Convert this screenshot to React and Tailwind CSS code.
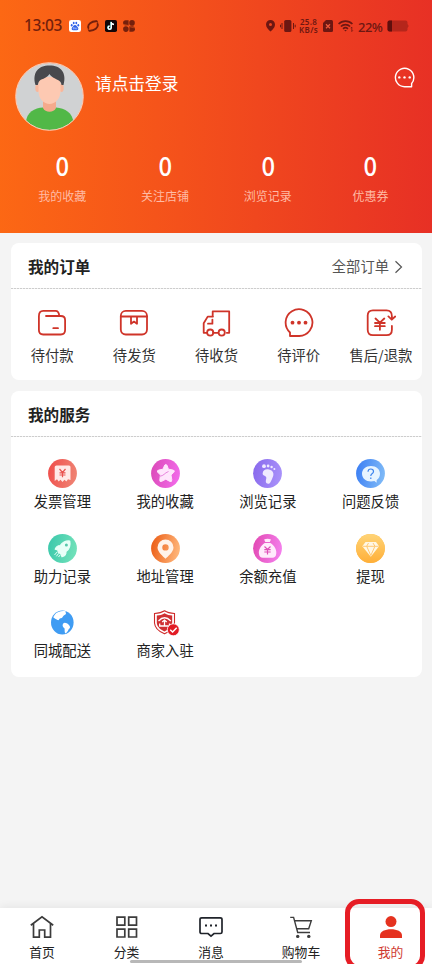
import React from "react";

const stats = ["我的收藏", "关注店铺", "浏览记录", "优惠券"];

function StatusBar() {
  return (
    <div className="flex h-[52px] items-center pl-6 pr-6 text-[#74200c]">
      <span className="w-[45px] font-['Noto_Sans'] text-[15.5px] font-medium leading-none tracking-[-0.3px]">13:03</span>
      <div className="flex items-center gap-[6px]">
        <svg width="12" height="12" viewBox="0 0 12 12">
          <rect width="12" height="12" rx="2.2" fill="#fff" />
          <g fill="#2f62e8">
            <ellipse cx="2.7" cy="5.3" rx="0.9" ry="1.2" />
            <ellipse cx="4.7" cy="3" rx="0.9" ry="1.3" />
            <ellipse cx="7.3" cy="3" rx="0.9" ry="1.3" />
            <ellipse cx="9.3" cy="5.3" rx="0.9" ry="1.2" />
            <path d="M6 4.9C7.4 4.9 7.8 6.4 8.8 7.3C10 8.6 9.2 10.3 7.7 10.2H4.3C2.8 10.3 2 8.6 3.2 7.3C4.2 6.4 4.6 4.9 6 4.9Z" />
          </g>
          <path d="M4.3 7.5H5.3V9H4.3ZM6.5 7.5V9H7.8V7.5" fill="none" stroke="#cfdcff" strokeWidth="0.5" />
        </svg>
        <svg width="12" height="12" viewBox="0 0 12 12" fill="none" stroke="#74200c" strokeLinecap="round">
          <path d="M1.4 8C.2 4.4 4.6 1 9.6 1.3" strokeWidth="1.9" />
          <path d="M10.6 4C11.8 7.6 7.4 11 2.4 10.7" strokeWidth="1.9" />
          <path d="M1.3 9.6C1.2 10.4 1.6 10.8 2.4 10.7M9.6 1.3C10.4 1.2 10.9 1.6 10.7 2.4" strokeWidth="1" />
        </svg>
        <svg width="12" height="12" viewBox="0 0 12 12">
          <rect width="12" height="12" rx="1.8" fill="#120608" />
          <path d="M6.3 2V7.7A1.6 1.6 0 1 1 4.7 6.1M6.3 2C6.5 3.5 7.5 4.4 9 4.5" fill="none" stroke="#3ce6e4" strokeWidth="1.3" transform="translate(-.3 -.2)" />
          <path d="M6.3 2V7.7A1.6 1.6 0 1 1 4.7 6.1M6.3 2C6.5 3.5 7.5 4.4 9 4.5" fill="none" stroke="#fff" strokeWidth="1.4" />
        </svg>
        <svg width="12" height="12" viewBox="0 0 12 12" fill="#74200c">
          <path d="M2.8 .2H5.6V5.6H2.7A2.7 2.7 0 0 1 2.8 .2Z" />
          <circle cx="9" cy="2.9" r="2.8" />
          <circle cx="2.9" cy="9.1" r="2.8" />
          <path d="M6.4 6.2H9.3A2.8 2.8 0 0 1 9.2 11.8H6.4Z" />
          <path d="M0 4.2L5 5.4M7 6.8L12 8" stroke="#f65c19" strokeWidth="0.5" />
        </svg>
      </div>
      <div className="ml-auto flex items-center text-[#6d1712]">
        <svg width="9" height="12" viewBox="0 0 9 12" fill="currentColor">
          <path fillRule="evenodd" d="M4.5 0A4.5 4.5 0 0 0 0 4.5C0 7.5 2.8 10 4.5 11.6C6.2 10 9 7.5 9 4.5A4.5 4.5 0 0 0 4.5 0ZM4.5 2.9A1.5 1.5 0 1 1 4.5 5.9A1.5 1.5 0 0 1 4.5 2.9Z" />
        </svg>
        <svg className="ml-[5px]" width="16" height="12" viewBox="0 0 16 12" fill="currentColor">
          <rect x="4.2" width="7.2" height="12" rx="1.6" />
          <path d="M2 3V9M.5 4.7V7.3M13.5 3V9M15.2 4.7V7.3" stroke="currentColor" strokeWidth="1" />
        </svg>
        <div className="ml-[2px] w-[21px] whitespace-nowrap text-center font-['Noto_Sans'] text-[8px] font-semibold leading-[8.5px] tracking-[0.3px]">
          25.8<br />KB/s
        </div>
        <svg className="ml-[4px]" width="10" height="12" viewBox="0 0 10 12">
          <path d="M3 0H8.5Q10 0 10 1.5V10.5Q10 12 8.5 12H1.5Q0 12 0 10.5V3Z" fill="currentColor" />
          <path d="M3 4.3L7 8.3M7 4.3L3 8.3" stroke="#ee5a3c" strokeWidth="1.3" />
        </svg>
        <svg className="ml-[5px]" width="16" height="12" viewBox="0 0 16 12" fill="none" stroke="currentColor" strokeWidth="1.7">
          <path d="M.6 4C4.4.2 10.6.2 14.4 4M2.9 6.5C5.5 4 9.5 4 12.1 6.5M5.1 8.8C6.5 7.5 8.5 7.5 9.9 8.8" />
          <path d="M6.2 10.1H8.8L7.5 11.6Z" fill="currentColor" stroke="none" />
          <path d="M13.8 7V11.5M12.8 8.2L13.8 7M14.8 10.4L13.8 11.5" strokeWidth="0.8" />
        </svg>
        <span className="ml-[4px] mt-[2px] w-[25px] font-['Noto_Sans'] text-[13px] font-medium leading-none tracking-[-0.5px]">22%</span>
        <svg className="ml-[4px] -mr-px" width="22" height="12" viewBox="0 0 22 12">
          <path d="M2.5 .5H18.5Q20.5 .5 20.5 2.5V4L21.7 6L20.5 8V9.5Q20.5 11.5 18.5 11.5H2.5Q.5 11.5 .5 9.5V2.5Q.5 .5 2.5 .5Z" fill="#b5261b" />
          <path d="M5 .5H2.5Q.5 .5 .5 2.5V9.5Q.5 11.5 2.5 11.5H5Z" fill="#5f0f0d" />
        </svg>
      </div>
    </div>
  );
}

function Avatar() {
  return (
    <svg className="block h-[69px] w-[69px]" viewBox="0 0 69 69">
      <defs>
        <clipPath id="face"><circle cx="34.5" cy="34.5" r="33.6" /></clipPath>
      </defs>
      <g clipPath="url(#face)">
        <rect width="69" height="69" fill="#d0d2d3" />
        <path d="M11 61C11 50 20 46 28 45.5H41C50 46 58 51 58.5 61V69H11Z" fill="#51b847" />
        <path d="M28 37H41V46C39 51 30 51 28 46Z" fill="#f5aa8c" />
        <ellipse cx="22.5" cy="26" rx="2.2" ry="4" fill="#f9b79b" />
        <ellipse cx="46.5" cy="26" rx="2.2" ry="4" fill="#f9b79b" />
        <path d="M23.5 15H45.5V29C45.5 37 40 42 34.5 42S23.5 37 23.5 29Z" fill="#fdc9b2" />
        <path d="M20.5 23C17 11 23 3.5 34.5 3.5C46 3.5 52 11 48.5 23H46.5C46 18 42 18 40 16.5C37 15 35.5 13.5 34.5 12C33 14 31 15.5 28.5 16.7C24 18 23.5 20 22.8 23Z" fill="#48494d" />
      </g>
      <circle cx="34.5" cy="34.5" r="33.8" fill="none" stroke="#ffd9ca" strokeWidth="0.9" />
    </svg>
  );
}

function Header() {
  return (
    <header className="h-[233px] bg-[linear-gradient(91deg,#fc6814_0%,#f4511b_42%,#e73025_100%)] text-white">
      <StatusBar />
      <div className="flex h-[89px] items-start pl-[15px] pr-[17px] pt-[10px]">
        <Avatar />
        <span className="ml-[11px] mt-[9px] text-[16.7px] leading-6">请点击登录</span>
        <svg className="ml-auto mt-[5px]" width="21" height="21" viewBox="0 0 21 21">
          <path d="M10.5 19.7A9.2 9.2 0 1 1 17.6 16.5V19.7Z" fill="none" stroke="#fff" strokeWidth="1.4" strokeLinejoin="round" />
          <g fill="#fff"><circle cx="5.3" cy="10.4" r="1.2" /><circle cx="10.5" cy="10.4" r="1.2" /><circle cx="15.7" cy="10.4" r="1.2" /></g>
        </svg>
      </div>
      <div className="ml-[11px] mr-[10px] grid grid-cols-4 pt-[8px] text-center">
        {stats.map((s) => (
          <div key={s}>
            <div className="scale-x-90 text-[26.5px] font-medium leading-8">0</div>
            <div className="mt-[6px] text-xs leading-[18px] text-[#ffbba5]">{s}</div>
          </div>
        ))}
      </div>
    </header>
  );
}

const Line = ({ children }) => (
  <svg width="30" height="30" viewBox="0 0 30 30" fill="none" stroke="#cf3429" strokeWidth="1.8" strokeLinecap="round" strokeLinejoin="round">
    {children}
  </svg>
);

const orders = [
  ["待付款", <Line><path d="M1.9 8.2V22Q1.9 26.5 6.2 26.5H23.8Q28.1 26.5 28.1 22V12.2Q28.1 8 23.8 8H9M1.9 8.2Q1.9 2.9 6.2 2.9H18.5Q21.8 2.9 22.3 8M16.3 20.2H21" /></Line>],
  ["待发货", <Line><rect x="1.8" y="2.9" width="26.2" height="23.6" rx="5" /><path d="M2 8.5H28M12 8.5V15.8L15 13.6L18 15.8V8.5" /></Line>],
  ["待收货", <Line><path d="M5.8 24.8H2.7V15.2L6.7 8.6H12M11.7 8.6V3.4H28.2V24.8H25.8M12 24.8H16.8M7 15.7H11.4V11.6" /><circle cx="9.2" cy="24.6" r="3.1" /><circle cx="20.7" cy="24.6" r="3.1" /></Line>],
  ["待评价", <Line><path d="M15.2 28H6V24.5A13.4 13.4 0 1 1 15.2 28Z" /><g fill="#cf3429" stroke="none"><circle cx="8.5" cy="14.7" r="1.9" /><circle cx="15" cy="14.7" r="1.9" /><circle cx="21.5" cy="14.7" r="1.9" /></g></Line>],
  ["售后/退款", <Line><path d="M25.9 18V21.8Q25.9 27.2 20.5 27.2H6.9Q1.7 27.2 1.7 21.8V7.6Q1.7 2.4 6.9 2.4H20.5Q25.9 2.4 25.9 8.2V11M22.4 8.4L25.8 11.7L29.2 8.5M9.5 10.5L13.9 14.7L18.3 10.5M9 15H18.8M9 18.2H18.8M13.9 15V21.8" /></Line>],
];

function Disc({ id, from, to, children }) {
  return (
    <svg width="29" height="29" viewBox="0 0 29 29">
      <defs><linearGradient id={id} x1="0" y1="0.4" x2="1" y2="0.6"><stop stopColor={from} /><stop offset="1" stopColor={to} /></linearGradient></defs>
      <circle cx="14.5" cy="14.5" r="14.4" fill={`url(#${id})`} />
      {children}
    </svg>
  );
}

const services = [
  ["发票管理", <Disc id="a" from="#f04f4c" to="#ef8474">
    <path d="M8.5 6.5H21Q22.5 6.5 22.5 8V21L20 20.3L18.3 22.5L16.5 20.7L14.5 23L12.5 20.7L10.7 22.5L9 20.3L6.7 22V8Q6.7 6.5 8.5 6.5Z" fill="#ffe9e7" />
    <path d="M11.5 10L14.5 13.5L17.5 10M11.5 13.8H17.5M11.5 16H17.5M14.5 13.5V18.3" stroke="#e95350" strokeWidth="1.2" fill="none" /></Disc>],
  ["我的收藏", <Disc id="b" from="#dc4bba" to="#f26bea">
    <path d="M14.8 5.5Q15.8 5.5 16.3 7L17.4 10.2L21.8 11Q24.3 11.5 22.8 13.3L20 16L20.8 20.7Q21 23.3 18.8 22.4L14.8 20.2L10.5 22.4Q8.5 23.2 8.8 20.8L9.5 16L6.7 13.2Q5.5 11.5 8 11L12 10.2L13.3 7Q13.8 5.5 14.8 5.5Z" fill="#ffe6fc" stroke="#ffe6fc" strokeLinejoin="round" />
    <path d="M8.3 17.3C13 17 13.3 14 17.5 12.5" stroke="#e884dd" strokeWidth="1" fill="none" /></Disc>],
  ["浏览记录", <Disc id="c" from="#8a6bed" to="#a992fa">
    <g fill="#f0eaff"><circle cx="11" cy="7.2" r="1.9" /><circle cx="15.1" cy="7" r="1.4" /><circle cx="18.6" cy="8" r="1.2" /><circle cx="21.4" cy="9.9" r="1" />
      <path d="M9.7 14C10.2 10.5 13.2 9.7 16 10.5C20 11.5 21.2 14.5 20 17.5C19 20 18.5 21.5 17.3 23.5C16.2 25.5 13 25 12.8 22.5C12.8 20.5 14 18.7 12.8 17.5C11.3 16.5 9.3 16.3 9.7 14Z" /></g></Disc>],
  ["问题反馈", <Disc id="d" from="#3d80f4" to="#80bbf7">
    <path d="M15 7C9.8 7 6 10.3 6 14.8C6 19.3 9.8 22.5 15 22.5C16.2 22.5 17.4 22.3 18.4 22L20.6 23.7L20.7 21C23 19.6 24 17.4 24 14.8C24 10.3 20.2 7 15 7Z" fill="#e7f4ff" />
    <path d="M12 12.8Q12.1 10 14.8 10Q17.5 10 17.5 12.5Q17.5 13.8 16 14.8Q14.8 15.7 14.8 17.1M14.8 18.6V20" stroke="#3c83ed" strokeWidth="1.2" fill="none" /></Disc>],
  ["助力记录", <Disc id="e" from="#3dc9ac" to="#73e2ba">
    <path d="M21.8 7C17.5 6.6 14.5 8.4 12.2 11.5C9.5 11.5 8.2 12.7 7.2 15.2L9.7 15.8L10.4 18.3L13 20.1L14 22.8C17.3 21.7 18.2 20 18 17.5C21.8 14.8 22.6 11.2 21.8 7Z" fill="#e8fff8" stroke="#e8fff8" strokeWidth="1.2" strokeLinejoin="round" />
    <circle cx="18.4" cy="11.1" r="1.5" fill="#58c8ab" /><path d="M9.3 17.8L6.5 21M10.7 19.3L8.4 22.3M12.3 20.8L10.5 23" stroke="#e8fff8" strokeWidth="1" /></Disc>],
  ["地址管理", <Disc id="f" from="#ec6019" to="#ffb87c">
    <path fillRule="evenodd" d="M14.5 5.6A8 8 0 0 0 6.5 13.4C6.5 17.9 12.2 22.3 14.5 24.7C16.8 22.3 22.5 17.9 22.5 13.4A8 8 0 0 0 14.5 5.6ZM14.5 10.2A3.2 3.2 0 1 1 14.5 16.6A3.2 3.2 0 0 1 14.5 10.2Z" fill="#fff3ea" /></Disc>],
  ["余额充值", <Disc id="g" from="#e34bb5" to="#f480ed">
    <path d="M11.1 5.4Q14.5 4.2 18 5.4L16.8 8H12.3ZM11.8 9H17.4C21.5 11.5 24 16 23.2 20Q22.7 23.8 19.5 23.8H9.8Q6.5 23.8 6 20C5.2 16 7.8 11.5 11.8 9Z" fill="#ffebfc" />
    <path d="M11.5 12.5L14.5 15.5L17.5 12.5M11.3 15.7H17.7M11.3 18H17.7M14.5 15.5V20.5" stroke="#df50b8" strokeWidth="1.2" fill="none" /></Disc>],
  ["提现", <Disc id="h" from="#ffb640" to="#ffc466">
    <circle cx="14.5" cy="14.5" r="14.4" fill="url(#gold)" />
    <defs><linearGradient id="gold" x2="0" y2="1"><stop stopColor="#ffd477" /><stop offset="1" stopColor="#ffaf38" /></linearGradient></defs>
    <path d="M9.5 8H20L23 12.3L14.8 22.7L6.3 12.3Z" fill="#fff7e6" />
    <path d="M7 12.3H22.5M10.8 12.5L14.8 21.5L18.8 12.5M10.8 12L12.5 9M18.8 12L17 9" stroke="#ffbd57" strokeWidth="0.8" fill="none" /></Disc>],
  ["同城配送", <svg width="29" height="29" viewBox="0 0 29 29">
    <ellipse cx="14.3" cy="14.5" rx="11.3" ry="12" fill="#3f9cf3" />
    <path d="M6.7 6.7C9 3.5 14 2.5 17.8 3.3C16.8 4.5 19.5 5.5 16.6 7C14.2 8 15.2 10 13 10.2C11 9.8 11.3 12.8 9.5 12C8.5 11 7 11 5.2 9.2ZM15.2 15.5C16.7 14 19 15.2 20.5 16.5C22.7 18.5 22.5 20 20.5 21.5C20 23 18.7 25 17.5 25.4C16.3 24.6 16.8 22 16.6 20.6C15 19.5 13.8 17.4 15.2 15.5Z" fill="#fff" /></svg>],
  ["商家入驻", <svg width="29" height="29" viewBox="0 0 29 29">
    <path d="M13.6 2.8C16.5 4.8 20 5.3 23.5 5.5V15C23 21 17.7 24.2 13.5 25.8C9 24 3.9 20.5 3.5 15V5.5C7.3 5.3 10.5 4.8 13.6 2.8Z" fill="#fff" stroke="#cf2929" strokeWidth="1.1" />
    <path d="M13.6 5.3C16 7 18.7 7.4 21.2 7.6V15C20.8 19.3 16.8 21.9 13.5 23.4C10 21.8 6.2 19.3 5.8 15V7.6C8.5 7.4 11.2 7 13.6 5.3Z" fill="#cf3032" />
    <path d="M7.5 13Q13.5 6.5 19.8 13M8.7 15.5V18H18.5V15.5M13.5 11.5V18M11.2 14L13.5 12L15.7 14" fill="none" stroke="#fff" strokeWidth="1.3" />
    <circle cx="22.3" cy="21.8" r="6" fill="#e21b24" stroke="#fff" strokeWidth="0.8" /><path d="M19.2 21.7L21.6 24L25.7 19.8" stroke="#fff" strokeWidth="1.5" fill="none" /></svg>],
];

const Rule = () => <div className="h-px bg-[repeating-linear-gradient(90deg,#cdcdcd_0_2px,#f1f1f1_2px_3px)]" />;

const NavIcon = ({ children }) => (
  <svg width="26" height="26" viewBox="0 0 26 26" fill="none" stroke="#3c3c3c" strokeWidth="1.7">{children}</svg>
);

const nav = [
  ["首页", <NavIcon><path d="M1.8 11.2L13 2.8L24.2 11.2M4.5 9.4V23.2H10.3V16H15.7V23.2H21.5V9.4" /></NavIcon>],
  ["分类", <NavIcon><path d="M3 3.2H10.8V11.2H3ZM14.7 3.2H22.5V11.2H14.7ZM3 15.2H10.8V23H3ZM14.7 15.2H22.5V23H14.7Z" /></NavIcon>],
  ["消息", <NavIcon><path d="M3.7 3.8H22.3Q24 3.8 24 5.4V18Q24 19.5 22.3 19.5H16L13 22.2L10 19.5H3.7Q2 19.5 2 18V5.4Q2 3.8 3.7 3.8Z" stroke="#20242b" /><path d="M7 10.5H9V12.5H7ZM12 10.5H14V12.5H12ZM17 10.5H19V12.5H17Z" fill="#20242b" stroke="none" /></NavIcon>],
  ["购物车", <NavIcon><path d="M2.2 3.4H5.6L9.7 18.5H22M6.5 6.7H23.3L20.7 14.8H8.8" strokeWidth="1.4" /><circle cx="9.7" cy="22.4" r="1.7" fill="#3c3c3c" stroke="none" /><circle cx="20.8" cy="22.4" r="1.7" fill="#3c3c3c" stroke="none" /></NavIcon>],
  ["我的", <svg width="26" height="26" viewBox="0 0 26 26" fill="#e5321f"><circle cx="13" cy="7.6" r="5.5" /><path d="M2 24V21.5C2 17.5 7 15.3 13 15.3S24 17.5 24 21.5V24Z" /></svg>],
];

export default function App() {
  return (
    <div className="relative flex h-[964px] w-[432px] flex-col overflow-hidden bg-[#f4f4f4] font-['Noto_Sans_CJK_SC',sans-serif] text-[#222]">
      <Header />
      <main className="flex flex-1 flex-col gap-[11px] pl-[11px] pr-[10px] pt-[10px]">
        <section className="h-[137px] rounded-[8px] bg-white">
          <div className="flex h-[45px] items-center justify-between pl-[17px] pr-[19px]">
            <h2 className="text-[15.6px] font-bold leading-6">我的订单</h2>
            <div className="flex items-center gap-[5px] text-[14.3px] leading-6 text-[#555]">
              全部订单
              <svg className="mt-[2px]" width="9" height="14" viewBox="0 0 9 14" fill="none" stroke="#555" strokeWidth="1.2"><path d="M1.5 1.2L7.5 7L1.5 12.8" /></svg>
            </div>
          </div>
          <Rule />
          <div className="grid grid-cols-5 pt-[19px]">
            {orders.map(([label, icon]) => (
              <div key={label} className="flex flex-col items-center">
                <div className="flex h-[30px] items-center">{icon}</div>
                <span className="mt-[5px] whitespace-nowrap text-[14.3px] leading-6 text-[#333]">{label}</span>
              </div>
            ))}
          </div>
        </section>
        <section className="h-[286px] rounded-[8px] bg-white">
          <div className="flex h-[45px] items-center pl-[17px]">
            <h2 className="text-[15.6px] font-bold leading-6">我的服务</h2>
          </div>
          <Rule />
          <div className="grid grid-cols-4 pt-[22px]">
            {services.map(([label, icon]) => (
              <div key={label} className="flex h-[74.5px] flex-col items-center">
                {icon}
                <span className="mt-px text-[14.3px] leading-6">{label}</span>
              </div>
            ))}
          </div>
        </section>
      </main>
      <nav className="grid h-[56px] grid-cols-[84px_85px_84px_96px_83px] bg-white shadow-[0_-2px_8px_rgba(0,0,0,0.06)]">
        {nav.map(([label, icon], i) => (
          <div key={label} className={i === 4 ? "flex flex-col items-center pt-[6px] text-[#cf3a31]" : "flex flex-col items-center pt-[6px]"}>
            {icon}
            <span className="mt-[2px] text-[12.8px] leading-5">{label}</span>
          </div>
        ))}
      </nav>
      <div className="absolute bottom-[1px] left-[130px] h-[3px] w-[172px] rounded-full bg-[#b8b8b8]" />
      <div className="absolute left-[345px] top-[899px] h-[71px] w-[80px] rounded-[14px] border-[5px] border-[#e61d25]" />
    </div>
  );
}
